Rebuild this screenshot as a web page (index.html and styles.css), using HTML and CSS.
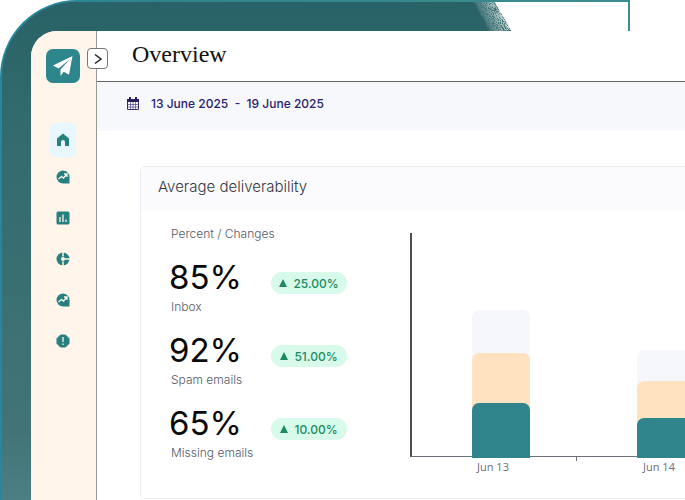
FILE: index.html
```html
<!DOCTYPE html>
<html lang="en">
<head>
<meta charset="utf-8">
<meta name="viewport" content="width=device-width, initial-scale=1">
<title>Overview</title>
<link rel="stylesheet" href="styles.css">
</head>
<body>
<svg class="backdrop" width="632" height="500" preserveAspectRatio="none" aria-hidden="true">
  <defs>
    <linearGradient id="shade" x1="0" y1="0" x2="0" y2="500" gradientUnits="userSpaceOnUse">
      <stop offset="0" stop-color="#286266"/><stop offset=".2" stop-color="#316a6d"/><stop offset=".86" stop-color="#427477"/><stop offset="1" stop-color="#4b7f84"/>
    </linearGradient>
    <linearGradient id="edge" x1="0" y1="0" x2="632" y2="0" gradientUnits="userSpaceOnUse">
      <stop offset="0" stop-color="#2688a0"/><stop offset=".25" stop-color="#2f858b"/><stop offset="1" stop-color="#3e8c8e"/>
    </linearGradient>
    <linearGradient id="fade" x1="477" y1="16" x2="502" y2="4" gradientUnits="userSpaceOnUse">
      <stop offset="0" stop-color="#286266"/><stop offset="1" stop-color="#286266" stop-opacity=".15"/>
    </linearGradient>
    <filter id="grain" x="0" y="0" width="1" height="1">
      <feTurbulence type="fractalNoise" baseFrequency="1.3" numOctaves="2" seed="4"/>
      <feColorMatrix values="0 0 0 0 0  0 0 0 0 0  0 0 0 0 0  0 0 0 8 -3.7" result="noise"/>
      <feComposite in="SourceGraphic" in2="noise" operator="in"/>
    </filter>
  </defs>
  <path d="M1 500V77A76 76 0 0 1 77 1H474L491 32V60H60V500Z" fill="url(#shade)"/>
  <path d="M473 1H494L512 32H489Z" fill="url(#fade)"/>
  <path d="M473 1H494L512 32H489Z" fill="#457679" filter="url(#grain)"/>
  <path d="M1 500V77A76 76 0 0 1 77 1H629V32" fill="none" stroke="url(#edge)" stroke-width="2"/>
</svg>
<div class="screen">
  <aside class="sidebar">
    <a class="logo" href="#" aria-label="Home page">
      <svg width="22" height="22" viewBox="0 0 22 22"><path d="M20.500 1 1 10.500l5.500 3L18 4 8.500 14.500V21l3.200-4.300 5.300 3z" fill="#fff"/></svg>
    </a>
    <button class="toggle" type="button" aria-label="Expand sidebar">
      <svg width="10" height="12" viewBox="0 0 10 12"><path d="m2 1.500 6 4.500-6 4.500" fill="none" stroke="#222" stroke-width="1.500"/></svg>
    </button>
    <nav class="nav" aria-label="Main">
      <a class="home" href="#" aria-label="Overview">
        <svg width="14" height="14" viewBox="0 0 14 14"><path d="M1 5.500 7 .500l6 5V13H9V9a2 2 0 0 0-4 0v4H1z" fill="#278080"/></svg>
      </a>
      <div class="links">
        <a href="#" aria-label="Trends"><svg width="14" height="14" viewBox="0 0 14 14"><path d="M7 .500A6.500 6.500 0 1 0 7 13.500h6.500V7A6.500 6.500 0 0 0 7 .500z" fill="#278080"/><path d="m2.500 9 3-2.500L7.500 8l3-3.500M8 4h3v3" fill="none" stroke="#fff3e6" stroke-width="1.300"/></svg></a>
        <a href="#" aria-label="Reports"><svg width="14" height="14" viewBox="0 0 14 14"><rect x=".5" y=".5" width="13" height="13" rx="1.500" fill="#278080"/><path d="M4 6v5M7 3.500V11M10 8.500V11" stroke="#fff3e6" stroke-width="1.300"/></svg></a>
        <a href="#" aria-label="Segments"><svg width="14" height="14" viewBox="0 0 14 14"><circle cx="7" cy="7" r="6.500" fill="#278080"/><path d="M7 0v4.500M7 9.500V14M8.500 7H14" stroke="#fff3e6" stroke-width="1.500"/><circle cx="7" cy="7" r="2" fill="#fff3e6"/></svg></a>
        <a href="#" aria-label="Performance"><svg width="14" height="14" viewBox="0 0 14 14"><path d="M7 .500A6.500 6.500 0 1 0 7 13.500h6.500V7A6.500 6.500 0 0 0 7 .500z" fill="#278080"/><path d="m2.500 9 3-2.500L7.500 8l3-3.500M8 4h3v3" fill="none" stroke="#fff3e6" stroke-width="1.300"/></svg></a>
        <a href="#" aria-label="Alerts"><svg width="14" height="14" viewBox="0 0 14 14"><path d="M4.500 1h5L13 4.500v5L9.500 13h-5L1 9.500v-5z" fill="#278080" stroke="#278080" stroke-linejoin="round"/><path d="M7 3v5M7 9.500V11" stroke="#fff3e6" stroke-width="1.300"/></svg></a>
      </div>
    </nav>
  </aside>
  <main class="main">
    <header class="header"><h1>Overview</h1></header>
    <div class="dates">
      <svg width="12" height="13" viewBox="0 0 12 13" aria-hidden="true"><path d="M.5 2.500h11v10H.5z" fill="#fff" stroke="#39297a"/><path d="M1 7.500h10M1 10h10M3.500 5v7M6 5v7M8.500 5v7" fill="none" stroke="#39297a" stroke-opacity=".6"/><path d="M0 2h12v3H0z" fill="#2b1c60"/><path d="M3 0v3M9 0v3" stroke="#2b1c60" stroke-width="2"/></svg>
      <span>13 June 2025 &nbsp;-&nbsp; 19 June 2025</span>
    </div>
    <section class="card">
      <h2>Average deliverability</h2>
      <div class="content">
        <div class="stats">
          <p class="caption">Percent / Changes</p>
          <div class="stat"><strong>85%</strong><span class="badge"><i></i>25.00%</span><small>Inbox</small></div>
          <div class="stat"><strong>92%</strong><span class="badge"><i></i>51.00%</span><small>Spam emails</small></div>
          <div class="stat"><strong>65%</strong><span class="badge"><i></i>10.00%</span><small>Missing emails</small></div>
        </div>
        <div class="chart">
          <div class="day">
            <div class="plot"><div class="bar"><div style="height:51px"></div><div style="height:58px"></div><div style="height:55px"></div></div></div>
            <span>Jun 13</span>
          </div>
          <div class="day">
            <div class="plot"><div class="bar"><div style="height:39px"></div><div style="height:45px"></div><div style="height:40px"></div></div></div>
            <span>Jun 14</span>
          </div>
        </div>
      </div>
    </section>
  </main>
</div>
</body>
</html>
```
FILE: styles.css
```css
* { box-sizing: border-box; }

body {
  margin: 0;
  padding: 31px 0 0 31px;
  background: #fff;
  font-family: Inter, "Open Sans", sans-serif;
}

.backdrop {
  position: absolute;
  top: 0;
  left: 0;
  height: 100vh;
  z-index: -1;
}

.screen {
  display: flex;
  min-height: calc(100vh - 31px);
  background: #fff;
  border-top-left-radius: 26px;
}

.sidebar {
  position: relative;
  flex: none;
  display: flex;
  flex-direction: column;
  align-items: center;
  gap: 40px;
  width: 66px;
  padding-top: 18px;
  background: #fff5ea;
  border-right: 1px solid #9b9994;
  border-top-left-radius: 26px;
}

.logo {
  display: grid;
  place-items: center;
  width: 34px;
  height: 34px;
  margin-right: 1px;
  border-radius: 7px;
  background: #2c868b;
}

.toggle {
  position: absolute;
  top: 17px;
  right: -12px;
  display: grid;
  place-items: center;
  width: 21px;
  height: 21px;
  padding: 0;
  border: 1px solid #777;
  border-radius: 4px;
  background: #fff;
}

.nav { margin-right: 1px; }

.nav a {
  display: grid;
  place-items: center;
  width: 26px;
  height: 27px;
}

.nav .home {
  height: 34px;
  border-radius: 5px;
  background: #e8f7fd;
}

.links {
  display: grid;
  gap: 14px;
  margin-top: 6px;
}

.main {
  flex: 1;
  min-width: 0;
}

.header {
  height: 51px;
  padding: 8px 35px;
  border-bottom: 1px solid #666;
}

h1 {
  margin: 0;
  color: #111;
  font: 24px/30px "Liberation Serif", serif;
}

.dates {
  display: flex;
  align-items: center;
  gap: 12px;
  height: 49px;
  padding: 0 30px 6px;
  background: #f6f8fc;
  color: #29206f;
  font-size: 12px;
  font-weight: 500;
}

.card {
  margin: 35px 0 0 43px;
  border: 1px solid #ececf3;
  border-right: 0;
  border-radius: 5px 0 0 5px;
}

h2 {
  margin: 0;
  padding: 9px 17px 13px;
  background: #fbfbfe;
  color: #33353f;
  font-size: 15px;
  font-weight: 300;
  line-height: 21px;
}

.content {
  display: flex;
  padding: 16px 0 23px 28px;
}

.stats {
  flex: none;
  width: 241px;
}

.caption {
  margin: 0 0 17px;
  padding-left: 2px;
  color: #555968;
  font-size: 12px;
  font-weight: 300;
  line-height: 16px;
}

.stat {
  display: grid;
  grid-template-columns: 102px 76px;
  align-items: center;
  height: 73px;
  align-content: start;
}

.stat:last-child { height: 58px; }

.stat strong {
  color: #090909;
  font-size: 33px;
  font-weight: 400;
  line-height: 36px;
}

.stat small {
  padding: 4px 0 0 2px;
  grid-column: 1 / -1;
  color: #555968;
  font-size: 12px;
  font-weight: 300;
  line-height: 16px;
}

.badge {
  display: flex;
  align-items: center;
  justify-content: center;
  gap: 6px;
  height: 22px;
  margin-top: 12px;
  border-radius: 11px;
  background: #d8faea;
  color: #198a61;
  font-size: 12px;
  font-weight: 500;
}

.badge i {
  border: 4px solid transparent;
  border-top: 0;
  border-bottom: 8px solid #198a61;
}

.chart {
  flex: 1;
  display: flex;
  min-width: 0;
  padding-top: 7px;
  overflow: hidden;
}

.day {
  flex: none;
  width: 166px;
  color: #6c6e78;
  font: 11px/16px "Open Sans", sans-serif;
  text-align: center;
}

.plot {
  display: flex;
  align-items: flex-end;
  justify-content: center;
  height: 224px;
  padding-left: 14px;
  border-bottom: 1px solid #6d7078;
}

.day:first-child .plot { border-left: 2px solid #4a4c50; }

.day span {
  display: block;
  padding-top: 2px;
}

.day:not(:first-child) span {
  background: linear-gradient(#6d7078, #6d7078) left top / 1px 4px no-repeat;
}

.bar {
  width: 58px;
  margin-bottom: -2px;
}

.bar div {
  margin-bottom: -8px;
  border-radius: 7px 7px 0 0;
  background: #f5f7fc;
}

.bar div:nth-child(2) { background: #ffe2c0; }

.bar div:last-child {
  margin-bottom: 0;
  background: #2f858b;
}
```
